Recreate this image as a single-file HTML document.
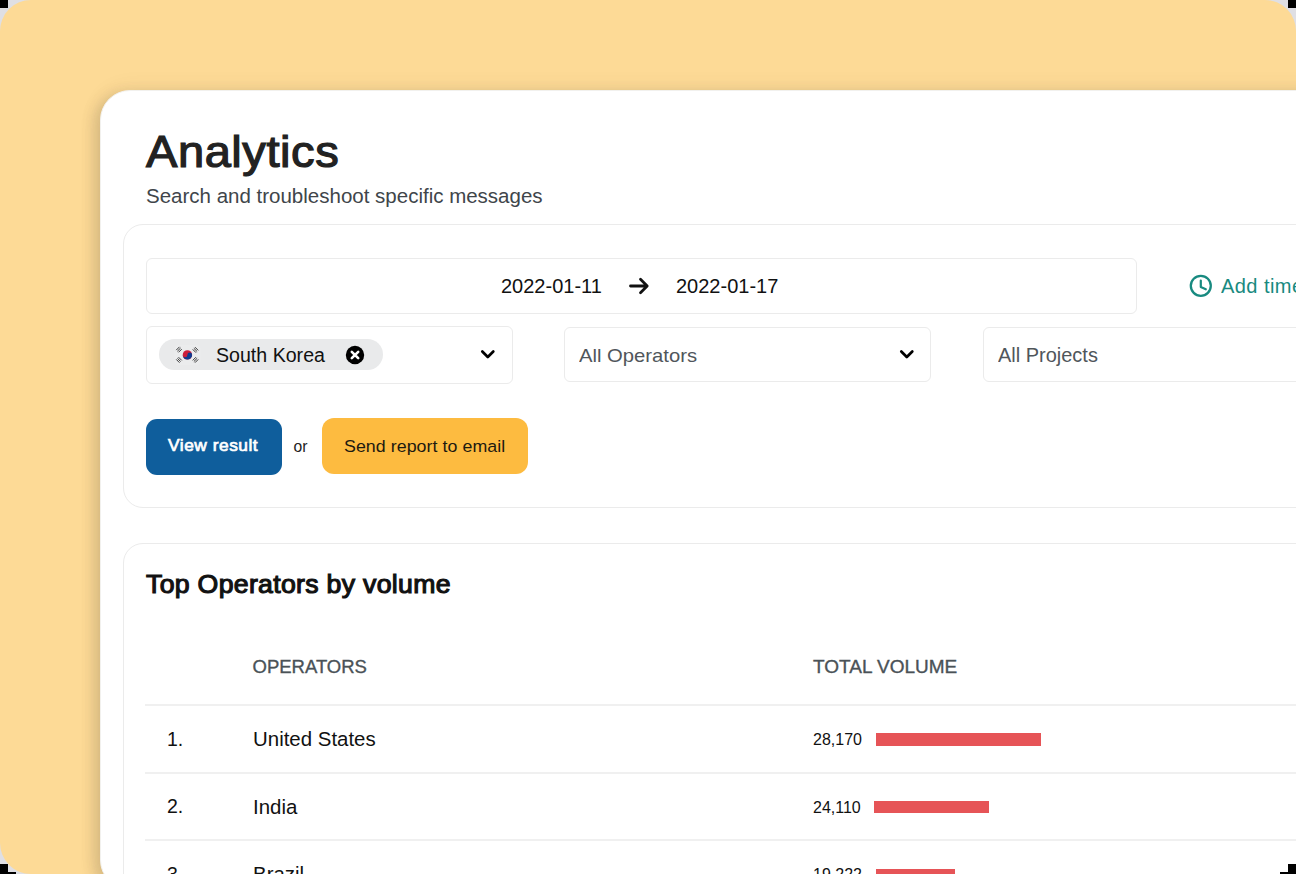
<!DOCTYPE html>
<html><head><meta charset="utf-8">
<style>
*{margin:0;padding:0;box-sizing:border-box}
html,body{width:1296px;height:874px;overflow:hidden;background:#dfdfe4;font-family:"Liberation Sans",sans-serif}
.a{position:absolute;white-space:nowrap;line-height:1}
#bg{position:absolute;left:0;top:0;width:1296px;height:874px;background:#fdda96;border-radius:31px}
#card{position:absolute;left:100px;top:90px;width:1300px;height:800px;background:#fff;border-radius:30px;box-shadow:-6px 4px 14px rgba(90,80,60,0.2),0 0 22px rgba(90,80,60,0.09);border:1.5px solid #f2f1ee}
.box{position:absolute;border:1px solid #ebebeb;background:#fff}
.blk{position:absolute;background:#000}
.hr{position:absolute;left:145px;width:1200px;height:2px;background:#f0f0f0}
.bar{position:absolute;background:#e65457}
</style></head><body>
<div id="bg">
 <div id="card"></div>
 <!-- header -->
 <div class="a" style="left:146px;top:130.2px;font-size:44px;color:#222;letter-spacing:0.5px;-webkit-text-stroke:1.2px #222;transform:scaleX(1.07);transform-origin:0 0">Analytics</div>
 <div class="a" style="left:146px;top:186.2px;font-size:20.5px;color:#40454a">Search and troubleshoot specific messages</div>

 <!-- filter panel -->
 <div class="box" style="left:123px;top:224px;width:1300px;height:284px;border-radius:20px"></div>
 <div class="box" style="left:146px;top:258px;width:991px;height:56px;border-radius:6px"></div>
 <div class="a" style="left:501px;top:276px;font-size:20px;color:#111">2022-01-11</div>
 <svg class="a" style="left:627px;top:276px" width="24" height="20" viewBox="0 0 24 20"><path d="M3.5 10H20M13.5 3.3L20.2 10L13.5 16.7" stroke="#111" stroke-width="2.8" fill="none" stroke-linecap="round" stroke-linejoin="round"/></svg>
 <div class="a" style="left:676px;top:276px;font-size:20px;color:#111">2022-01-17</div>

 <svg class="a" style="left:1188px;top:274px" width="26" height="24" viewBox="0 0 26 24"><circle cx="12.8" cy="11.8" r="10" stroke="#188a80" stroke-width="2.3" fill="none"/><path d="M12.8 6.5V13L17.8 15.3" stroke="#188a80" stroke-width="2.2" fill="none" stroke-linecap="round" stroke-linejoin="round"/></svg>
 <div class="a" style="left:1220.5px;top:277.4px;font-size:19.3px;color:#188a80;letter-spacing:0.4px;transform:scaleX(1.04);transform-origin:0 0">Add time</div>

 <!-- selects -->
 <div class="box" style="left:145.5px;top:326px;width:367px;height:58px;border-radius:6px"></div>
 <div class="a" style="left:159px;top:339.3px;width:224px;height:30.7px;border-radius:16px;background:#e9eaeb"></div>
 <svg class="a" style="left:173px;top:344px" width="30" height="22" viewBox="0 0 30 22">
  <rect x="1.5" y="1" width="26" height="20" rx="4" fill="#fff" opacity="0.12"/>
  <circle cx="14.4" cy="10.9" r="4.7" fill="#cd1d3b"/>
  <path d="M9.7 10.9A4.7 4.7 0 0 0 19.1 10.9A2.35 2.35 0 0 0 14.4 10.9A2.35 2.35 0 0 1 9.7 10.9Z" fill="#0f3b8f"/>
  <g fill="none" stroke="#333" stroke-width="0.9">
   <g transform="translate(6 5.6) rotate(-45)"><path d="M-2.3 -1.6H2.3M-2.3 0H2.3M-2.3 1.6H2.3"/></g>
   <g transform="translate(22.5 5.9) rotate(45)"><path d="M-2.3 -1.6H2.3M-2.3 0H2.3M-2.3 1.6H2.3"/></g>
   <g transform="translate(6 15.9) rotate(45)"><path d="M-2.3 -1.6H2.3M-2.3 0H2.3M-2.3 1.6H2.3"/></g>
   <g transform="translate(22.5 15.9) rotate(-45)"><path d="M-2.3 -1.6H2.3M-2.3 0H2.3M-2.3 1.6H2.3"/></g>
  </g>
 </svg>
 <div class="a" style="left:216px;top:345.6px;font-size:19.6px;color:#111">South Korea</div>
 <svg class="a" style="left:345px;top:345px" width="20" height="20" viewBox="0 0 20 20"><circle cx="10" cy="10" r="9.2" fill="#000"/><path d="M6.8 6.8L13.2 13.2M13.2 6.8L6.8 13.2" stroke="#fff" stroke-width="2.6" stroke-linecap="round"/></svg>
 <svg class="a" style="left:479px;top:347px" width="18" height="14" viewBox="0 0 18 14"><path d="M3.3 4.5L8.8 10L14.3 4.5" stroke="#000" stroke-width="2.7" fill="none" stroke-linecap="round" stroke-linejoin="round"/></svg>

 <div class="box" style="left:564.4px;top:327.4px;width:367px;height:55px;border-radius:6px"></div>
 <div class="a" style="left:579px;top:345.8px;font-size:19px;color:#50565b;transform:scaleX(1.065);transform-origin:0 0">All Operators</div>
 <svg class="a" style="left:898px;top:347px" width="18" height="14" viewBox="0 0 18 14"><path d="M3.3 4.5L8.8 10L14.3 4.5" stroke="#000" stroke-width="2.7" fill="none" stroke-linecap="round" stroke-linejoin="round"/></svg>

 <div class="box" style="left:983px;top:327.4px;width:400px;height:55px;border-radius:6px"></div>
 <div class="a" style="left:998px;top:345.5px;font-size:19.4px;color:#50565b;transform:scaleX(1.03);transform-origin:0 0">All Projects</div>

 <!-- buttons -->
 <div class="a" style="left:146px;top:418.5px;width:135.6px;height:56px;border-radius:11px;background:#0f5e9c"></div>
 <div class="a" style="left:168px;top:437.2px;font-size:16.5px;color:#fff;-webkit-text-stroke:0.7px #fff;letter-spacing:0.5px;transform:scaleX(1.05);transform-origin:0 0">View result</div>
 <div class="a" style="left:293.5px;top:438.7px;font-size:15.7px;color:#222">or</div>
 <div class="a" style="left:321.5px;top:418.3px;width:206.5px;height:56.2px;border-radius:12px;background:#fdbb40"></div>
 <div class="a" style="left:343.6px;top:439.2px;font-size:16.8px;letter-spacing:0.05px;color:#1e1a10;transform:scaleX(1.06);transform-origin:0 0">Send report to email</div>

 <!-- table panel -->
 <div class="box" style="left:123px;top:543px;width:1300px;height:400px;border-radius:20px"></div>
 <div class="a" style="left:146px;top:571.6px;font-size:25px;color:#111;letter-spacing:0.3px;-webkit-text-stroke:1.1px #111;transform:scaleX(1.065);transform-origin:0 0">Top Operators by volume</div>
 <div class="a" style="left:252.5px;top:658.2px;font-size:18.5px;color:#4a5257;-webkit-text-stroke:0.35px #4a5257">OPERATORS</div>
 <div class="a" style="left:813px;top:657.4px;font-size:19px;color:#4a5257;-webkit-text-stroke:0.35px #4a5257">TOTAL VOLUME</div>

 <div class="hr" style="top:704px"></div>
 <div class="hr" style="top:771.6px"></div>
 <div class="hr" style="top:839.2px"></div>

 <div class="a" style="left:167px;top:729.8px;font-size:19.5px;color:#111">1.</div>
 <div class="a" style="left:252.5px;top:729.9px;font-size:19.3px;color:#111;transform:scaleX(1.06);transform-origin:0 0">United States</div>
 <div class="a" style="left:813px;top:732px;font-size:16px;color:#111">28,170</div>
 <div class="bar" style="left:876px;top:733px;width:164.5px;height:12.5px"></div>

 <div class="a" style="left:167px;top:797.4px;font-size:19.5px;color:#111">2.</div>
 <div class="a" style="left:252.5px;top:797.5px;font-size:19.3px;color:#111;transform:scaleX(1.06);transform-origin:0 0">India</div>
 <div class="a" style="left:813px;top:799.6px;font-size:16px;color:#111">24,110</div>
 <div class="bar" style="left:873.5px;top:801px;width:115.3px;height:12.3px"></div>

 <div class="a" style="left:167px;top:865px;font-size:19.5px;color:#111">3.</div>
 <div class="a" style="left:252.5px;top:865.1px;font-size:19.3px;color:#111;transform:scaleX(1.06);transform-origin:0 0">Brazil</div>
 <div class="a" style="left:813px;top:867.2px;font-size:16px;color:#111">19,222</div>
 <div class="bar" style="left:876.4px;top:868.6px;width:78.8px;height:12.5px"></div>
</div>
<!-- corner artifacts -->
<div class="blk" style="left:0;top:0;width:8px;height:8px"></div>
<div class="blk" style="right:0;top:0;width:8px;height:8px"></div>
<div class="blk" style="left:0;top:864px;width:8px;height:10px"></div>
<div class="blk" style="left:0;top:872px;width:16px;height:2px"></div>
<div class="blk" style="right:0;top:864px;width:8px;height:10px"></div>
<div class="blk" style="right:0;top:872px;width:16px;height:2px"></div>
</body></html>
